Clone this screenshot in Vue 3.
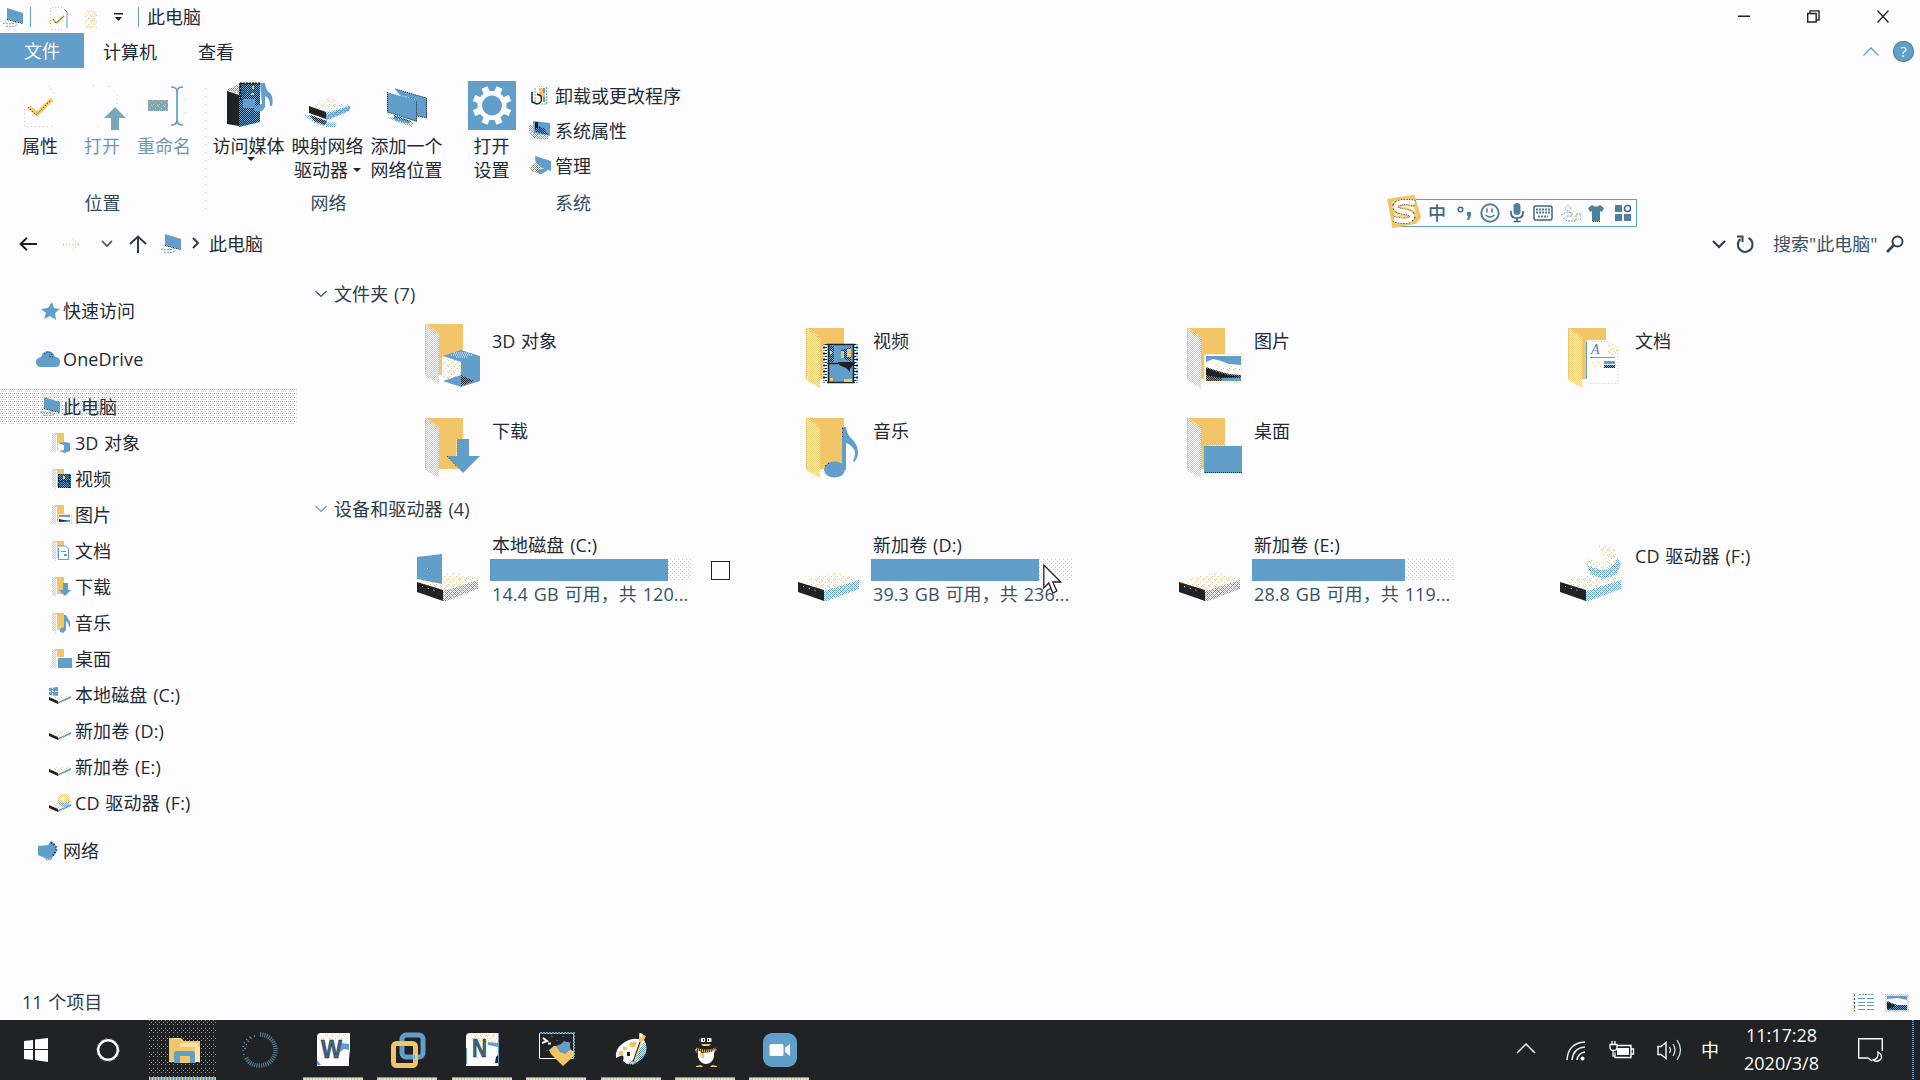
<script setup>
const places = [
  { icon: 'obj', label: '3D 对象' },
  { icon: 'vid', label: '视频' },
  { icon: 'pic', label: '图片' },
  { icon: 'doc', label: '文档' },
  { icon: 'down', label: '下载' },
  { icon: 'music', label: '音乐' },
  { icon: 'desk', label: '桌面' },
]
const drives = [
  { icon: 'drive-c', label: '本地磁盘 (C:)', used: 178, info: '14.4 GB 可用，共 120...', box: true },
  { icon: 'drive', label: '新加卷 (D:)', used: 168, info: '39.3 GB 可用，共 236...' },
  { icon: 'drive', label: '新加卷 (E:)', used: 153, info: '28.8 GB 可用，共 119...' },
  { icon: 'drive-f', label: 'CD 驱动器 (F:)' },
]
const apps = ['word', 'vm', 'note', 'term', 'paint', 'qq', 'meet']
const imeTools = ['smile', 'mic', 'keys', 'person', 'shirt', 'tiles']
</script>

<template>
  <div class="screen">
    <svg class="defs" width="0" height="0">
      <defs>
        <pattern id="p-sparse" width="6" height="6" patternUnits="userSpaceOnUse"><path class="o" d="M0 0h1v1H0zM3 2h1v1H3zM1 4h1v1H1zM5 5h1v1H5z" /></pattern>
        <pattern id="p-gold" width="2" height="2" patternUnits="userSpaceOnUse"><path class="o" d="M0 0h1v1H0zM1 1h1v1H1z" /></pattern>
        <pattern id="p-mix" width="4" height="4" patternUnits="userSpaceOnUse"><path class="b" d="M0 0h1v1H0zM2 2h1v1H2zM1 1h1v1H1zM3 3h1v1H3zM2 0h1v1H2zM0 2h1v1H0z" /><path class="o" d="M3 1h1v1H3zM1 3h1v1H1z" /></pattern>
        <pattern id="p-blue" width="2" height="2" patternUnits="userSpaceOnUse"><path class="b" d="M0 0h1v1H0zM1 1h1v1H1z" /></pattern>
        <pattern id="p-dark" width="2" height="2" patternUnits="userSpaceOnUse"><path class="b" d="M0 0h2v2H0z" /><path class="k" d="M0 0h1v1H0zM1 1h1v1H1z" /></pattern>
      </defs>

      <symbol id="i-pc" viewBox="0 0 21 20"><path class="b" d="M5 0l16 5v10L5 11z" /><path fill="url(#p-dark)" d="M5 11l16 4v1L5 12z" /><path fill="url(#p-sparse)" d="M1 13h14v3H1z" /><path d="M1 15q9 2 14-1M4 18q8 2 12-2" fill="none" stroke="#629eca" stroke-dasharray="2 1" /></symbol>

      <symbol id="folder" viewBox="0 0 55 64"><path class="o" d="M1 0h37v51H14L12 8z" /><path class="w" d="M0 0l14 9v51L0 52z" /><path fill="url(#p-gold)" d="M0 0l14 9v51L0 52z" /><path d="M.5 0v51M0 .5l13 9" fill="none" stroke="#f2c569" /></symbol>
      <symbol id="i-obj" viewBox="0 0 62 66"><use href="#folder" x="7" width="55" height="64" /><path class="w" d="M24 33l18-6 20 6v24l-20 7-18-7z" /><path fill="url(#p-sparse)" d="M25 34l18 3v21l-18 0z" /><path class="b" d="M25 32l18-6 19 6-19 6zM43 37l19-5v25l-19 6zM25 57l18-6v12z" /><path d="M33 31h22M38 33h12M36 29h15" stroke="#fdfdff" stroke-dasharray="1 1" /><path fill="url(#p-dark)" d="M43 51l13 6-13 5z" /></symbol>
      <symbol id="i-vid" viewBox="0 0 62 66"><use href="#folder" x="7" width="55" height="64" /><path class="w" d="M24 16h35v39H24z" /><path d="M26 16v39M57 16v39" stroke="#202224" stroke-width="4" stroke-dasharray="1 2" /><path d="M25 16v39M58 16v39" stroke="#629eca" stroke-width="2" stroke-dasharray="1 1" /><path class="b" d="M29 16h26v39H29z" /><path d="M29.5 16v39M54.500 16v39M28 16.500h28M28 35.500h28M28 54.500h28" stroke="#202224" stroke-width="1.600" /><path fill="url(#p-dark)" d="M30 18h5v16h-5zM42 22l10-3v15l-10-5z" /><path class="o" d="M42 23h3v7h-3zM48 21h4v8h-4zM45 51h8v3h-8zM31 50h3v3h-3zM31 23h2v3h-2z" /><path class="k" d="M39 34h15v3l-3 4v3l-4-4-7-3z" /></symbol>
      <symbol id="i-pic" viewBox="0 0 62 66"><use href="#folder" x="7" width="55" height="64" /><path class="w" d="M24 26h38v29H24z" /><path d="M24.500 26.500h37v28h-37z" fill="none" stroke="#f2c569" stroke-dasharray="1 2" /><path class="b" d="M26 28h35v9l-12-1-8-3-8-2-7 3z" /><path fill="url(#p-sparse)" d="M30 35l30 4v5l-20-2z" /><path fill="url(#p-dark)" d="M26 39l9 3 14 4 12 1v6H26z" /><path class="k" d="M26 40l8 3 13 4 13 2-20 1-14-3z" /><path class="b" d="M42 50h19v3H42z" /></symbol>
      <symbol id="i-doc" viewBox="0 0 62 66"><use href="#folder" x="7" width="55" height="64" /><path class="w" d="M26 12h21l10 8v36H26z" /><path d="M28 13.500h20l9 7v35H27" fill="none" stroke="#f2c569" stroke-dasharray="1 2" /><path class="b" d="M25 14h1v37h-1zM29 29h25v1H29zM43 33h11v3H43z" /><path fill="url(#p-dark)" d="M43 37h11v3H43z" /><path fill="url(#p-sparse)" d="M46 15l10 6v6H46zM30 33h11v2H30zM30 37h11v2H30z" /><text class="letter" x="30" y="26">A</text></symbol>
      <symbol id="i-down" viewBox="0 0 62 66"><use href="#folder" x="7" width="55" height="64" /><path class="b" d="M39 21h12v17h11L45 55 29 38h10z" /><path d="M38.500 21v17" stroke="#fdfdff" stroke-dasharray="1 1" /><path d="M29 38l9 10" stroke="#202224" stroke-dasharray="1 2" /></symbol>
      <symbol id="i-music" viewBox="0 0 62 66"><use href="#folder" x="7" width="55" height="64" /><ellipse class="b" cx="35.500" cy="51.500" rx="10.500" ry="8" /><path class="b" d="M43 9h4q1 8 6 12 6 6 6 14 0 5-4 9l-1-1q4-8 0-13-3-4-7-5v27h-4z" /><path d="M43.500 10v10M26 48l4-3" stroke="#202224" stroke-dasharray="1 3" /></symbol>
      <symbol id="i-desk" viewBox="0 0 62 66"><use href="#folder" x="7" width="55" height="64" /><path d="M27 27.500h18" stroke="#fdfdff" stroke-dasharray="1 1" /><path class="b" d="M24 28h38v27H24z" /><path d="M25 54.500h37" stroke="#202224" stroke-dasharray="1 1" /></symbol>

      <symbol id="s-folder" viewBox="0 0 21 20"><path fill="url(#p-gold)" d="M0 0l4 1v19l-4-3z" /><path class="o" d="M2 0h10v17H5V2z" /></symbol>
      <symbol id="s-obj" viewBox="0 0 21 20"><use href="#s-folder" width="21" height="20" /><path class="w" d="M6 10h12v9l-5 1-7-3z" /><path class="b" d="M6 10l7-1 5 1v8l-5 2-6-2 5-1v-5z" /></symbol>
      <symbol id="s-vid" viewBox="0 0 21 20"><use href="#s-folder" width="21" height="20" /><path fill="url(#p-dark)" d="M6 5h13v14H6z" /><path d="M6.500 5v14M17.500 5v14M6 12h12" stroke="#202224" stroke-dasharray="2 1" /><path class="o" d="M11 7h2v3h-2z" /></symbol>
      <symbol id="s-pic" viewBox="0 0 21 20"><use href="#s-folder" width="21" height="20" /><path class="w" d="M6 9h14v10H6z" /><path d="M6.500 9.500h13v9h-13z" fill="none" stroke="#f2c569" stroke-dasharray="1 1" /><path class="b" d="M7 10h11v2H7zM10 15h8v2h-8z" /><path class="k" d="M7 14l9 2-9 1z" /></symbol>
      <symbol id="s-doc" viewBox="0 0 21 20"><use href="#s-folder" width="21" height="20" /><path class="w" d="M6 5h11v14H6z" /><path d="M6.500 7v11.500h10V8l-3-3H6" fill="none" stroke="#629eca" /><path class="b" d="M9 10h5v1H9zM12 13h3v2h-3z" /></symbol>
      <symbol id="s-down" viewBox="0 0 21 20"><use href="#s-folder" width="21" height="20" /><path class="b" d="M11 6h5v7h3l-6 6-6-6h4z" /></symbol>
      <symbol id="s-music" viewBox="0 0 21 20"><use href="#s-folder" width="21" height="20" /><path class="b" d="M12 2h2l4 7v5h-1l-1-4-2-2v9l-3 3-3-1v-3l4-2z" /></symbol>
      <symbol id="s-desk" viewBox="0 0 21 20"><use href="#s-folder" width="21" height="20" /><path class="w" d="M5 8h16v12H5z" /><path class="b" d="M6 9h14v10H6z" /></symbol>
      <symbol id="s-drive" viewBox="0 0 22 20"><path fill="url(#p-sparse)" d="M1 13l11-4 9 2-12 5z" /><path class="k" d="M0 12l9 4v3l-9-4z" /><path class="b" d="M9 17l13-6v2L9 19z" /><path fill="url(#p-sparse)" d="M9 16l13-6v3L9 19z" /></symbol>
      <symbol id="s-drive-c" viewBox="0 0 22 20"><use href="#s-drive" width="22" height="20" /><path class="b" d="M0 3l9-1v9l-9-1z" /><path d="M3.500 2v9M0 6.500h9" stroke="#fdfdff" stroke-dasharray="2 1" /></symbol>
      <symbol id="s-drive-f" viewBox="0 0 22 20"><use href="#s-drive" width="22" height="20" /><circle cx="15" cy="7" r="6.500" fill="url(#p-gold)" /><path fill="url(#p-blue)" d="M9 9l6 1 6-2-2 5-4 1-4-1z" /><circle class="w" cx="14" cy="6" r="2" /></symbol>

      <symbol id="i-drive" viewBox="0 0 62 60"><path fill="url(#p-sparse)" d="M0 38l36-10 25 7-35 12z" /><path fill="url(#p-mix)" d="M26 47l35-11v9L26 58z" /><path class="k" d="M0 38l26 8v11L0 48z" /><path d="M5 42.500l16 5" stroke="#fdfdff" stroke-dasharray="1 5" /></symbol>
      <symbol id="i-drive-c" viewBox="0 0 62 60"><use href="#i-drive" width="62" height="60" /><path class="b" d="M0 13l25-3v30l-25-5z" /><path class="w" d="M10 24h1v1h-1z" /></symbol>
      <symbol id="i-drive-f" viewBox="0 0 62 60"><use href="#i-drive" width="62" height="60" /><circle class="w" cx="43" cy="18" r="17" /><circle cx="43" cy="18" r="17" fill="url(#p-sparse)" /><path fill="url(#p-mix)" d="M26 20q9 5 15 6 12 0 16-12l4 5q-3 11-8 13l-10 3-11-4z" /><path class="w" d="M31 3l9 0q0 8 4 10v5l-5 2q-8-5-12-6z" /></symbol>

      <symbol id="r-prop" viewBox="0 0 48 48"><path d="M8.500 23v21.500H39M33 4l6 8" fill="none" stroke="#f2c569" stroke-dasharray="1 3" /><path d="M13 25l8 7 15-15" fill="none" stroke="#f2c569" stroke-width="4" /><path d="M12 25l8 8 15-15" fill="none" stroke="#202224" stroke-dasharray="1 2" /></symbol>
      <symbol id="r-open" viewBox="0 0 48 48"><path d="M15 3.500h2M31 4l8 8v14M20 44h1" fill="none" stroke="#f2c569" stroke-dasharray="1 3" /><path fill="#7ba6bc" d="M37 25l11 11h-7v12h-8V36h-7z" /></symbol>
      <symbol id="r-name" viewBox="0 0 48 48"><path fill="#7ba6bc" d="M8 18h20v11H8z" /><path fill="url(#p-sparse)" d="M8 18h20v11H8z" /><path d="M31 5q6 0 6 5v28q0 5-6 5M43 5q-6 0-6 5v28q0 5 6 5" fill="none" stroke="#629eca" stroke-width="1.700" /><path d="M45.500 17v16" stroke="#f2c569" stroke-dasharray="1 12" /></symbol>
      <symbol id="r-media" viewBox="0 0 48 48"><path fill="url(#p-mix)" d="M2 8l12-6v10z" /><path class="k" d="M2 9l12 4v31L2 42z" /><path fill="url(#p-dark)" d="M14 1h21v39l-21 5z" /><path d="M15 1.500h20M15.500 1v17" stroke="#202224" stroke-width="2" stroke-dasharray="2 1" /><path class="b" d="M18 17h12v9H18zM35 1h5q1 8 5 10 4 4 2 13h-2q0-8-5-10v11q-3 6-10 4-3-4 3-6l4-1z" /><path class="o" d="M27 4h2v3h-2zM26 11h3v2h-3z" /></symbol>
      <symbol id="r-map" viewBox="0 0 48 48"><path fill="url(#p-sparse)" d="M6 24l20-8 20 7-24 9z" /><path class="k" d="M5 24l17 6v7L5 31z" /><path fill="#9fb5a4" d="M22 33l24-9v4L22 38z" /><path fill="url(#p-mix)" d="M22 31l24-8v6L22 39zM0 33h8l15 7-3 4-10-3zM22 40l11 1-2 4-9 0z" /><path fill="url(#p-dark)" d="M6 33l17 6-2 4-11-4z" /></symbol>
      <symbol id="r-add" viewBox="0 0 48 48"><path class="b" d="M12 7l32 9v20l-10-2z" /><path d="M12.500 7l31 9v20l-9-2" fill="none" stroke="#202224" stroke-dasharray="1 1" /><path class="b" d="M4 10l30 9v21L4 30z" /><path d="M4.500 10v20l29 9V19" fill="none" stroke="#202224" stroke-dasharray="1 1" /><path d="M5 10l29 8" stroke="#fdfdff" stroke-dasharray="1 2" /><path fill="url(#p-dark)" d="M11 33l17 6-2 3-15-4z" /><path fill="url(#p-mix)" d="M4 35h7l20 6-2 4-15-5z" /></symbol>
      <symbol id="r-gear" viewBox="0 0 48 49"><path class="b" d="M0 0h48v49H0z" /><g stroke="#fdfdff" stroke-width="6.500"><path d="M16.500 6.500l15 36M31.500 6.500l-15 36M6 17l36 15M6 32l36-15" /></g><circle class="w" cx="24" cy="24.500" r="14.500" /><circle class="b" cx="24" cy="24.500" r="10" /></symbol>
      <symbol id="r-un" viewBox="0 0 22 21"><path d="M6 3v15M17.500 2v17H10" fill="none" stroke="#629eca" stroke-dasharray="2 1" /><path d="M8 1.500h8l3 3v14" fill="none" stroke="#f2c569" stroke-dasharray="1 1" /><path class="b" d="M14 3h2v14h-2z" /><path class="o" d="M10 3h4v8h-4zM13 8h3v4h-3z" /><path d="M3 7v10l5 2q6-1 4-8L8 9" fill="none" stroke="#202224" stroke-width="1.500" /></symbol>
      <symbol id="r-sys" viewBox="0 0 22 21"><path class="b" d="M4 1l17 2v13L5 13z" /><path class="k" d="M6 2h3v8H6zM10 6l9 8h-4L9 10z" /><path fill="url(#p-dark)" d="M6 8h9l4 7-12-3z" /><path fill="url(#p-mix)" d="M0 5h5v8l14 2v4l-5 1-9-2-5-6z" /></symbol>
      <symbol id="r-man" viewBox="0 0 22 21"><path class="b" d="M6 1l16 5v10L7 11z" /><path class="w" d="M0 12l7-4 7 6-2 5-9-3z" /><path fill="url(#p-mix)" d="M0 12l7-4 8 7-2 5-10-4z" /><path class="b" d="M9 15l9-2v3l-6 3-4-1z" /></symbol>

      <symbol id="t-smile" viewBox="0 0 22 22"><circle cx="11" cy="11" r="8.700" fill="none" stroke="#4f819f" stroke-width="2" /><path d="M8 6.500v4M13 6.500v4M6.500 13q4.500 4 9 0" fill="none" stroke="#4f819f" stroke-width="1.600" /></symbol>
      <symbol id="t-mic" viewBox="0 0 22 22"><rect x="7.500" y="1" width="7" height="12" rx="3.500" fill="#4f819f" /><path d="M5 9v2q0 5 6 5t6-5V9M11 16v3M7.500 19.500h7" fill="none" stroke="#41667c" stroke-width="1.700" /></symbol>
      <symbol id="t-keys" viewBox="0 0 22 22"><rect x="2" y="4" width="18" height="14" rx="2" fill="none" stroke="#41667c" stroke-width="1.500" /><path d="M4 7.500h14M4 10.500h14M6 14.500h10" stroke="#4f819f" stroke-width="2" stroke-dasharray="2 1" /></symbol>
      <symbol id="t-person" viewBox="0 0 22 22"><circle cx="9" cy="6" r="2.500" fill="none" stroke="#629eca" stroke-dasharray="1 1" /><path d="M2 13l6-3 5 1v3H7M4 16l4 3h9v-7h5v6" fill="none" stroke="#629eca" stroke-dasharray="2 1" /><path fill="url(#p-sparse)" d="M12 11h9v8h-9z" /></symbol>
      <symbol id="t-shirt" viewBox="0 0 22 22"><path fill="#4f819f" d="M7 3q4 3 8 0l4 3-2 4-2-1v10H7V9l-2 1-2-4z" /><path d="M8 19.500h7" stroke="#202224" stroke-dasharray="1 1" /></symbol>
      <symbol id="t-tiles" viewBox="0 0 22 22"><path fill="#4f819f" d="M3 3h7v7H3zM3 12h7v7H3zM12 12h7v7h-7z" /><circle cx="15.500" cy="6.500" r="3" fill="none" stroke="#41667c" stroke-width="1.500" /></symbol>

      <symbol id="a-word" viewBox="0 0 40 40"><path class="w" d="M3 7q0-4 4-4h29v16l-1 10v7H3z" /><path fill="url(#p-sparse)" d="M8 3h27v6H8z" /><path class="b" d="M27 13l8 1v6l-5-1-4 3zM3 30l4 5H3z" /><text class="app-letter" x="7" y="28" textLength="21" lengthAdjust="spacingAndGlyphs">W</text></symbol>
      <symbol id="a-note" viewBox="0 0 40 40"><path class="w" d="M3 7q0-4 4-4h29v33H3z" /><path fill="url(#p-sparse)" d="M8 3h27v9H8z" /><path class="b" d="M25 12l10 1v4l-10-2z" /><path d="M3.500 18v16M35.500 3v33" stroke="#629eca" /><path class="k" d="M33 27l2-2v8h-3z" /><text class="app-letter" x="9" y="27" textLength="15" lengthAdjust="spacingAndGlyphs">N</text></symbol>
      <symbol id="a-vm" viewBox="0 0 40 40"><rect x="14" y="5" width="21" height="22" rx="4" fill="none" stroke="#629eca" stroke-width="5" /><rect x="5.500" y="13.500" width="22" height="22" rx="3" fill="none" stroke="#f2c569" stroke-width="5" /><path d="M14 16v6q0 5 5 5h8" fill="none" stroke="#629eca" stroke-width="4" stroke-dasharray="2 1" /></symbol>
      <symbol id="a-term" viewBox="0 0 40 40"><path d="M2.500 3.500h34v25h-34z" fill="#202224" stroke="#fdfdff" /><path d="M3 3h34v24" fill="none" stroke="#629eca" stroke-width="2" stroke-dasharray="2 1" /><path d="M6 8l4 3-5 2M11 13.500h3" fill="none" stroke="#fdfdff" stroke-width="2" /><path d="M15 6v1m5 3v1m6-5v1m5 5v1m-21 7v1m23-9v1" stroke="#629eca" /><path class="b" d="M19 16l5-2 3-3 6 2v5l2 3-8 4-7-5z" /><path class="o" d="M12 20l5-4h2l4 6 5 2 5-4 4 1v5L26 36 14 24z" /></symbol>
      <symbol id="a-paint" viewBox="0 0 40 40"><path class="w" d="M4 28q-1-9 6-14 8-6 16-5l6 1q5 8 0 16-7 9-17 8l-4-3q2-7-3-5z" /><path fill="url(#p-blue)" d="M24 26l8-15q5 8-1 17l-10 7-6-1z" /><path class="o" d="M17 13l5-2 3 2-2 4h-5zM11 17h4v3h-4zM7 21h4v4H7zM27 3l7 3-2 4-5 4z" /><path class="k" d="M15 22h3v4h-3z" /><path d="M30 7L21 34" stroke="#f2c569" stroke-width="2.500" /><path d="M28 12l-7 20" stroke="#202224" /><path class="w" d="M28 3l3 1-2 5z" /></symbol>
      <symbol id="a-qq" viewBox="0 0 40 40"><path class="w" d="M15 8h4v4h-4zM21 8h4v4h-4zM12 20l4 3 9-1 3-2v7q-2 7-8 7t-8-7z" /><path class="k" d="M17 9h1v2h-1zM22 9h1v2h-1z" /><path d="M14 8.500v3M25.500 8.500v3M9 19l2 4M30 19l-2 4" stroke="#629eca" /><path class="o" d="M15 14h10l-2 2h-6zM14 23h4v5h-3zM10 36l5-1 2 2h-7zM31 36l-5-1-2 2h7z" /><path d="M10 19q10 4 20 0" fill="none" stroke="#f2c569" stroke-width="3" stroke-dasharray="1 1" /></symbol>
      <symbol id="a-meet" viewBox="0 0 40 40"><rect class="b" x="3" y="3" width="34" height="34" rx="9" /><rect class="w" x="9.500" y="14" width="14" height="12" rx="1.500" /><path class="w" d="M25 18l5-4v12l-5-4z" /></symbol>
      <symbol id="shot" viewBox="0 0 24 18"><path fill="url(#p-gold)" d="M0 0h24v18H0z" /><path class="w" d="M2 2h20v14H2z" /><path class="b" d="M2 2h20v4l-9-2-11 1z" /><path fill="url(#p-dark)" d="M2 7l10 4h10v5H2z" /><path class="k" d="M2 8l9 4-9 3z" /></symbol>
    </svg>

    <header class="title">
      <svg class="t1" width="21" height="20"><use href="#i-pc" /></svg>
      <i class="rule"></i>
      <svg class="t2" width="19" height="24" viewBox="0 0 19 24"><path d="M2 .5h11M.5 1v20M2 22.500h12" fill="none" stroke="#f2c569" stroke-dasharray="1 2" /><path d="M14 2l3 3v16" fill="none" stroke="#629eca" /><path d="M3 13l4 3 7-7" fill="none" stroke="#f2c569" stroke-width="2" /><path d="M3 12l3 4 8-7" fill="none" stroke="#202224" stroke-dasharray="1 1" /></svg>
      <svg class="t3" width="12" height="18" viewBox="0 0 12 18"><path fill="url(#p-sparse)" d="M0 1h12v17H0z" /><path d="M2 1h6l3 4-4 4 4 4-4 4H2" fill="none" stroke="#f2c569" stroke-dasharray="1 1" /></svg>
      <svg class="t4" width="9" height="9" viewBox="0 0 9 9"><path class="k" d="M0 0h9v1.500H0zM1 4h7L4.500 8z" /></svg>
      <i class="rule"></i>
      <span class="caption">此电脑</span>
      <div class="winbtns">
        <svg width="12" height="13" viewBox="0 0 12 13"><path class="k" d="M0 5.500h12v1.500H0z" /></svg>
        <svg width="13" height="13" viewBox="0 0 13 13"><path d="M.7 3.500h8.500v8.500H.7zM3 3V1h9v9H9.500" fill="none" stroke="#202224" stroke-width="1.400" /><path d="M3.500 1.500h7" stroke="#629eca" /></svg>
        <svg width="12" height="13" viewBox="0 0 12 13"><path d="M.5 .5l11 12M11.500 .5l-11 12" stroke="#202224" stroke-width="1.300" /></svg>
      </div>
    </header>

    <nav class="tabs">
      <span class="file">文件</span><span class="tab">计算机</span><span class="tab second">查看</span>
      <svg class="collapse" width="16" height="9" viewBox="0 0 16 9"><path d="M.5 8.500L8 1l7.500 7.500" fill="none" stroke="#629eca" stroke-width="1.300" /></svg>
      <span class="help">?</span>
    </nav>

    <section class="ribbon">
      <div class="group g1">
        <div class="tools">
          <div class="tool"><svg width="48" height="48"><use href="#r-prop" /></svg>属性</div>
          <div class="tool wide off"><svg width="48" height="48"><use href="#r-open" /></svg>打开</div>
          <div class="tool off"><svg width="48" height="48"><use href="#r-name" /></svg>重命名</div>
        </div>
        <div class="gname">位置</div>
      </div>
      <div class="group g2">
        <div class="tools">
          <div class="tool"><svg width="48" height="48"><use href="#r-media" /></svg>访问媒体<b class="arrow under"></b></div>
          <div class="tool"><svg width="48" height="48"><use href="#r-map" /></svg>映射网络<span class="line2">驱动器<b class="arrow"></b></span></div>
          <div class="tool"><svg width="48" height="48"><use href="#r-add" /></svg>添加一个<span>网络位置</span></div>
        </div>
        <div class="gname">网络</div>
      </div>
      <div class="group g3">
        <div class="tools">
          <div class="tool"><svg class="gear" width="48" height="49"><use href="#r-gear" /></svg>打开<span>设置</span></div>
          <ul class="sys">
            <li><svg width="22" height="21"><use href="#r-un" /></svg>卸载或更改程序</li>
            <li><svg width="22" height="21"><use href="#r-sys" /></svg>系统属性</li>
            <li><svg width="22" height="21"><use href="#r-man" /></svg>管理</li>
          </ul>
        </div>
        <div class="gname">系统</div>
      </div>
    </section>

    <div class="address">
      <svg class="back" width="19" height="14" viewBox="0 0 19 14"><path d="M8 .8L1.500 7 8 13.200M1.500 7H18" fill="none" stroke="#202224" stroke-width="1.900" /></svg>
      <svg class="fwd" width="17" height="13" viewBox="0 0 17 13"><path d="M0 6.500h16M10 1l6 5.500-6 5.500" fill="none" stroke="#f2c569" stroke-width="1.300" stroke-dasharray="1 2" /></svg>
      <svg class="hist" width="12" height="8" viewBox="0 0 12 8"><path d="M1 1l5 5 5-5" fill="none" stroke="#375366" stroke-width="1.600" /></svg>
      <svg class="up" width="18" height="18" viewBox="0 0 18 18"><path d="M1 9l8-7.500L17 9M9 2v16" fill="none" stroke="#2b3c47" stroke-width="2" /></svg>
      <svg class="pc" width="21" height="20"><use href="#i-pc" /></svg>
      <svg class="sep" width="7" height="12" viewBox="0 0 7 12"><path d="M1 1l5 5-5 5" fill="none" stroke="#2b3c47" stroke-width="2" /></svg>
      <span class="crumb">此电脑</span>
      <svg class="drop" width="14" height="9" viewBox="0 0 14 9"><path d="M1 1l6 6 6-6" fill="none" stroke="#2b3c47" stroke-width="2.200" /></svg>
      <svg class="reload" width="18" height="18" viewBox="0 0 18 18"><path d="M12.500 3q4 2 4 6.500a7.300 7.300 0 1 1-12-5.500M1 1.500h5.500V7" fill="none" stroke="#2f4554" stroke-width="2" /></svg>
      <span class="search">搜索"此电脑"</span>
      <svg class="glass" width="18" height="18" viewBox="0 0 18 18"><circle cx="11.500" cy="6.500" r="5" fill="none" stroke="#2f4554" stroke-width="2" /><path d="M8 10l-7 7" stroke="#2f4554" stroke-width="2.600" /></svg>
    </div>

    <div class="body">
      <aside class="tree">
        <div class="node"><svg class="root star" width="19" height="18" viewBox="0 0 19 18"><path class="b" d="M11 0l2 6 6 1-5 4 1 7-6-4-6 3 2-6-5-4 7-1z" /></svg>快速访问</div>
        <div class="node"><svg class="root cloud" width="24" height="16" viewBox="0 0 24 16"><path class="b" d="M4 16q-4-1-4-5t5-5q2-6 7-6t7 6q5 0 5 5t-4 5z" /><path d="M8 3l3-2 4 1 2 4-5-1" fill="none" stroke="#202224" stroke-dasharray="1 2" /></svg><span class="latin">OneDrive</span></div>
        <div class="node on"><svg class="root" width="21" height="20"><use href="#i-pc" /></svg>此电脑</div>
        <div v-for="p in places" :key="p.icon" class="node kid"><svg width="21" height="20"><use :href="'#s-' + p.icon" /></svg>{{ p.label }}</div>
        <div v-for="d in drives" :key="d.label" class="node kid vol"><svg width="22" height="20"><use :href="'#s-' + d.icon" /></svg>{{ d.label }}</div>
        <div class="node last"><svg class="root net" width="20" height="20" viewBox="0 0 20 20"><path class="b" d="M0 5l10-1 3-4 4 3 2 7-4 6-4 3-11-5z" /><path d="M13 2q7 3 5 8l-4 6" fill="none" stroke="#202224" stroke-width="2" stroke-dasharray="1 2" /><path fill="url(#p-mix)" d="M5 15l7 1 3 2-6 2z" /></svg>网络</div>
      </aside>

      <main class="content">
        <h2><svg width="12" height="8" viewBox="0 0 12 8"><path d="M.5 1L6 6.500 11.500 1" fill="none" stroke="#3d5563" stroke-width="1.200" /></svg>文件夹 (7)</h2>
        <div class="grid folders">
          <div v-for="p in places" :key="p.icon" class="cell">
            <svg :class="{ lower: p.icon !== 'obj' }" width="62" height="66"><use :href="'#i-' + p.icon" /></svg>
            <span class="name">{{ p.label }}</span>
          </div>
        </div>
        <h2 class="h-dev"><svg width="12" height="8" viewBox="0 0 12 8"><path d="M.5 1L6 6.500 11.500 1" fill="none" stroke="#629eca" stroke-width="1.200" /></svg>设备和驱动器 (4)</h2>
        <div class="grid drives">
          <div v-for="d in drives" :key="d.label" class="cell">
            <svg width="62" height="60"><use :href="'#i-' + d.icon" /></svg>
            <div class="vol-info" :class="{ plain: !d.info }">
              <div class="name">{{ d.label }}</div>
              <template v-if="d.info">
                <div class="bar"><i :style="{ width: d.used + 'px' }"></i></div>
                <div class="free">{{ d.info }}</div>
              </template>
            </div>
            <i v-if="d.box" class="check"></i>
          </div>
        </div>
      </main>
    </div>

    <footer class="status">
      <span>11 个项目</span>
      <svg width="22" height="19" viewBox="0 0 22 19"><path d="M2 0v19" stroke="#f2c569" stroke-width="3" stroke-dasharray="1 2" /><path d="M2.500 1v17" stroke="#41667c" stroke-dasharray="2 2" /><path d="M7 1.500h15" stroke="#629eca" stroke-dasharray="2 1" /><path d="M6 5.500h7m2 0h7M6 9.500h7m2 0h7M6 12.500h7m2 0h7M6 16.500h7m2 0h7" stroke="#629eca" /></svg>
      <svg width="24" height="18"><use href="#shot" /></svg>
    </footer>

    <div class="taskbar">
      <svg class="start" width="24" height="24" viewBox="0 0 24 24"><path class="w" d="M0 3l9-1v9H0zM11 1.500L24 0v11H11zM0 12h9v10l-9-1zM11 12h13v12l-13-2z" /></svg>
      <svg class="ring" width="24" height="24" viewBox="0 0 24 24"><circle cx="12" cy="12" r="9.800" fill="none" stroke="#fdfdff" stroke-width="2.400" /><circle cx="12" cy="12" r="11.300" fill="none" stroke="#629eca" stroke-dasharray="2 3" /></svg>
      <div class="explorer"><svg width="32" height="27" viewBox="0 0 32 27"><path class="o" d="M0 1h12l3 3h16v21H0z" /><path fill="#fbe2a9" d="M11 6h18v4H11zM26 10h5v15h-5zM4 1h6v1H4z" /><path class="b" d="M5 26V17q0-3 3-3h15q3 0 3 3v9h-5v-7H11v7z" /><path class="o" d="M11 20h10v6H11z" /></svg></div>
      <svg class="spin" width="38" height="38" viewBox="0 0 38 38"><path d="M20 3.500a15.500 15.500 0 0 1 0 31q-10 0-14-8" fill="none" stroke="#4c7694" stroke-width="4.500" stroke-dasharray="1.200 1" /><path d="M4 24Q0 11 12 5M5 18Q7 8 15 5" fill="none" stroke="#629eca" stroke-dasharray="1 3" stroke-width="1.500" /></svg>
      <div v-for="a in apps" :key="a" class="app"><svg width="40" height="40"><use :href="'#a-' + a" /></svg></div>
      <div class="tray">
        <svg class="y1" width="20" height="11" viewBox="0 0 20 11"><path d="M1 10l9-9 9 9" fill="none" stroke="#fdfdff" stroke-width="1.500" /></svg>
        <svg class="y2" width="20" height="20" viewBox="0 0 20 20"><path d="M1 19Q2 2 19 1M6 19Q7 7 19 6M11 19q1-7 8-8" fill="none" stroke="#e1edf4" stroke-width="1.500" /><circle class="w" cx="16.500" cy="17.500" r="2" /></svg>
        <svg class="y3" width="25" height="18" viewBox="0 0 25 18"><path d="M8 4.500h14v12H6v-5M22.500 8h2v5h-2" fill="none" stroke="#fdfdff" stroke-width="1.400" /><path class="w" d="M8 7h12v7H8z" /><path d="M3 0v3M6 0v3M1 3.500h7v3q0 3-3.500 3T1 6.500zM4 10v5h2" fill="#202224" stroke="#fdfdff" stroke-width="1.300" /></svg>
        <svg class="y4" width="25" height="22" viewBox="0 0 25 22"><path d="M1 7.500h3l5-4v16l-5-4H1z" fill="none" stroke="#fdfdff" stroke-width="1.400" /><path d="M12.500 8q2 3 0 6M16 5q4 6 0 12M20 1q7 10 0 20" fill="none" stroke="#d0e0eb" stroke-width="1.300" /></svg>
        <span class="lang">中</span>
        <div class="clock"><span>11:17:28</span><span>2020/3/8</span></div>
        <svg class="y5" width="25" height="25" viewBox="0 0 25 25"><path d="M14 23l-4-3H.7V.7h23.600V13" fill="none" stroke="#fdfdff" stroke-width="1.400" /><path d="M20 14q5 3 3 7-4 4-8 1 6-1 5-8z" fill="none" stroke="#fdfdff" stroke-width="1.300" /></svg>
        <i class="peek"></i>
      </div>
    </div>

    <div class="ime">
      <svg class="logo" width="34" height="33" viewBox="0 0 34 33"><path class="w" d="M1 6L28 1l5 23-4 4-22 4z" /><path d="M2.500 5.500L26 2l6 20-4 5-21 4z" fill="none" stroke="#f2c569" stroke-width="4" /><path d="M28 8Q11 5 8.500 11q-1 5 11 6 10 3 3 8-6 2-16-1" fill="none" stroke="#f2c569" stroke-width="8.500" /><path d="M28 8Q11 5 8.500 11q-1 5 11 6 10 3 3 8-6 2-16-1" fill="none" stroke="#202224" stroke-width="6" stroke-dasharray="1 1.500" /><path d="M28 8Q11 5 8.500 11q-1 5 11 6 10 3 3 8-6 2-16-1" fill="none" stroke="#fdfdff" stroke-width="4.500" /></svg>
      <span class="zh">中</span>
      <svg class="punct" width="15" height="14" viewBox="0 0 15 14"><circle cx="3.500" cy="3.500" r="2.300" fill="none" stroke="#41667c" stroke-width="1.400" /><path fill="#4f819f" d="M10 6h4v4l-2 4h-2l1-4h-1z" /></svg>
      <svg v-for="t in imeTools" :key="t" class="ime-tool" width="22" height="22"><use :href="'#t-' + t" /></svg>
    </div>
    <svg class="pointer" width="20" height="32" viewBox="0 0 20 32"><path d="M.8 1v23l5-5 4 10 4-2-4-9h8z" fill="#fdfdff" stroke="#202224" stroke-width="1.300" /></svg>
  </div>
</template>

<style>
html, body { margin: 0; background: #fdfdff; overflow: hidden; }
</style>

<style scoped>
.screen { position: relative; display: flex; flex-direction: column; width: 1920px; height: 1080px; overflow: hidden; background: #fdfdff; color: #1f2b34; font: 18px/24px "Open Sans", "Noto Sans CJK SC", sans-serif; white-space: nowrap; word-spacing: 1px; }
svg { display: block; flex: none; overflow: visible; }
.defs { position: absolute; }
.b { fill: #629eca; }
.o { fill: #f2c569; }
.k { fill: #202224; }
.w { fill: #fdfdff; }
.letter { font: italic 14px "Liberation Serif", serif; fill: #4f819f; }
.app-letter { font: bold 25px "Liberation Sans", sans-serif; fill: #3f6582; stroke: #202224; stroke-width: .5; }

.title { display: flex; align-items: center; height: 33px; padding-left: 2px; }
.rule { width: 1px; height: 20px; background: #629eca; }
.t1 { margin: 2px 7px 0 0; }
.t2 { margin: 4px 16px 0 19px; }
.t3 { margin: 4px 17px 0 0; }
.t4 { margin: 2px 15px 0 0; }
.caption { margin: 0 0 0 8px; }
.winbtns { display: flex; gap: 57px; margin: 0 31px 1px auto; }

.tabs { display: flex; align-items: center; height: 35px; }
.file { width: 84px; height: 35px; line-height: 37px; text-align: center; background: #629eca; color: #fdfdff; }
.tab { margin: 3px 0 0 19px; }
.second { margin-left: 41px; }
.collapse { margin: 2px 14px 0 auto; }
.help { width: 21px; height: 21px; margin: 2px 6px 0 0; line-height: 20px; border-radius: 50%; background: #629eca; color: #fdfdff; text-align: center; font-size: 15px; box-shadow: inset 0 0 0 1px #4f819f; }

.ribbon { display: flex; height: 152px; }
.group { display: flex; flex-direction: column; box-sizing: border-box; height: 152px; }
.tools { display: flex; height: 123px; }
.tool { position: relative; display: flex; flex-direction: column; align-items: center; padding-top: 14px; }
.tool svg { margin-bottom: 4px; }
.tool .gear { margin: -1px 0 4px; }
.g1 { width: 205px; }
.g1 .tools { padding-left: 10px; }
.g1 .tool { width: 60px; }
.g1 .tool.wide { width: 64px; }
.off { color: #7098b2; }
.gname { color: #304a5c; text-align: center; }
.g2 { width: 251px; background: repeating-linear-gradient(#cfcfa5 0 1px, transparent 1px 8px) 0 20px / 1px 122px no-repeat; }
.g2 .tools { padding-left: 4px; }
.g2 .tool { width: 79px; }
.g2 .gname { padding-right: 4px; }
.g3 { width: 400px; }
.g3 .tool { width: 71px; }
.g3 .gname { text-align: left; padding-left: 99px; }
.arrow { display: inline-block; border: 4px solid transparent; border-top-color: #202224; border-bottom: 0; }
.line2 { display: flex; align-items: center; gap: 5px; }
.under { position: absolute; top: 89px; left: 38px; }
.sys { list-style: none; margin: 0; padding: 10px 0 0 2px; }
.sys li { display: flex; align-items: center; height: 35px; gap: 4px; }

.address { display: flex; align-items: center; height: 48px; padding-left: 19px; }
.fwd { margin-left: 25px; }
.hist { margin-left: 21px; }
.up { margin-left: 16px; }
.pc { margin-left: 13px; }
.sep { margin: -3px 0 0 11px; }
.crumb { margin-left: 10px; }
.drop { margin-left: auto; }
.reload { margin-left: 10px; }
.search { width: 105px; margin-left: 19px; color: #375366; }
.glass { margin: 0 16px 0 8px; }

.body { display: flex; height: 717px; }
.tree { width: 298px; padding-top: 25px; }
.node { display: flex; align-items: center; height: 36px; margin-bottom: 12px; }
.node .root { margin: 0 3px 0 39px; }
.node .star { margin: 0 3px 0 41px; }
.node .cloud { margin: 0 3px 0 36px; }
.node .net { margin: 0 5px 0 38px; }
.latin { letter-spacing: .15px; margin-top: -1px; }
.node.on { width: 297px; margin: 0; background: conic-gradient(at 1px 1px, transparent 75%, #f2c569 0) 0 0 / 4px 4px, conic-gradient(at 1px 1px, transparent 75%, #629eca 0) 2px 0 / 4px 4px, conic-gradient(at 1px 1px, transparent 75%, #f2c569 0) 1px 2px / 4px 4px, conic-gradient(at 1px 1px, transparent 75%, #f2c569 0) 3px 2px / 8px 4px; }
.node.on .root { margin: 0 3px 0 39px; }
.kid { margin: 0; padding-left: 52px; gap: 2px; }
.vol { padding-left: 49px; gap: 4px; letter-spacing: .1px; }
.last { margin-top: 12px; }

.content { flex: 1; padding-top: 11px; }
h2 { display: flex; align-items: center; gap: 7px; height: 30px; margin: 0; padding: 0 0 0 17px; font-size: 18px; font-weight: 400; letter-spacing: .1px; line-height: 22px; color: #2b3c47; }
.grid { display: grid; grid-template-columns: repeat(3, 381px) 1fr; padding-left: 119px; }
.folders { grid-template-rows: 90px 80px; padding-top: 15px; }
.folders svg { position: relative; left: 1px; }
.drives { padding-top: 10px; }
.cell { display: flex; align-items: flex-start; min-width: 0; }
.lower { margin-top: 4px; }
.folders .name { margin: 5px 0 0 13px; }
.drives svg { margin-top: 10px; }
.vol-info { width: 202px; margin-left: 11px; }
.vol-info .name, .free { padding-left: 2px; letter-spacing: .1px; }
.vol-info .name { line-height: 23px; margin-bottom: 2px; }
.plain { padding-top: 11px; }
.bar { height: 22px; margin-bottom: 1px; background: conic-gradient(at 1px 1px, transparent 75%, #f2c569 0) 0 0 / 4px 4px, conic-gradient(at 1px 1px, transparent 75%, #f2c569 0) 2px 2px / 4px 4px; }
.bar i { display: block; height: 22px; background: #629eca; }
.free { color: #375366; }
.check { box-sizing: border-box; width: 19px; height: 19px; margin: 27px 0 0 19px; border: 1px solid #202224; background: #fdfdff; }

.status { display: flex; align-items: center; height: 35px; padding: 0 11px 0 22px; gap: 11px; color: #2b3c47; }
.status span { margin: -2px auto 0 0; }

.taskbar { display: flex; height: 60px; background: #202224; color: #fdfdff; }
.start { margin: 18px 0 0 24px; }
.ring { margin: 18px 29px 0 48px; }
.explorer { width: 67px; height: 60px; box-sizing: border-box; padding: 17px 0 0 20px; background: repeating-linear-gradient(90deg, #f2c569 0 1px, #629eca 1px 3px) 0 57px / 100% 3px no-repeat, conic-gradient(at 1px 1px, transparent 75%, #629eca 0) 0 0 / 4px 4px, conic-gradient(at 1px 1px, transparent 75%, #629eca 0) 2px 2px / 4px 8px; }
.spin { margin: 11px 25px 0 24px; }
.app { width: 60px; height: 60px; margin-right: 14.400px; padding-top: 10px; box-sizing: border-box; display: flex; justify-content: center; background: linear-gradient(#629eca, #629eca) 0 57px / 100% 1px no-repeat, repeating-linear-gradient(90deg, #f2c569 0 1px, #cfe1ee 1px 3px) 0 58px / 100% 2px no-repeat; }
.app svg { position: relative; left: 1px; }
.tray { display: flex; align-items: flex-start; margin-left: auto; }
.y1 { margin: 23px 30px 0 0; }
.y2 { margin: 21px 23px 0 0; }
.y3 { margin: 21px 23px 0 0; }
.y4 { margin: 19px 19px 0 0; }
.y5 { margin: 18px 0 0 37px; }
.lang { margin: 16px 23px 0 0; line-height: 28px; }
.clock { display: flex; flex-direction: column; width: 79px; align-items: center; padding-top: 1px; line-height: 28px; }
.peek { width: 2px; height: 60px; margin: 0 6px 0 29px; background: repeating-linear-gradient(#629eca 0 1px, #202224 1px 2px); }

.ime { position: absolute; left: 1393px; top: 199px; width: 244px; height: 28px; box-sizing: border-box; border: 1px solid #629eca; background: #fdfdff; display: flex; align-items: center; }
.logo { position: absolute; left: -7px; top: -5px; }
.zh { margin-left: 34px; width: 18px; font-weight: 500; color: #41667c; }
.punct { margin: 0 7px 0 11px; }
.ime-tool { margin-right: 4.600px; }
.pointer { position: absolute; left: 1043px; top: 564px; }
</style>
